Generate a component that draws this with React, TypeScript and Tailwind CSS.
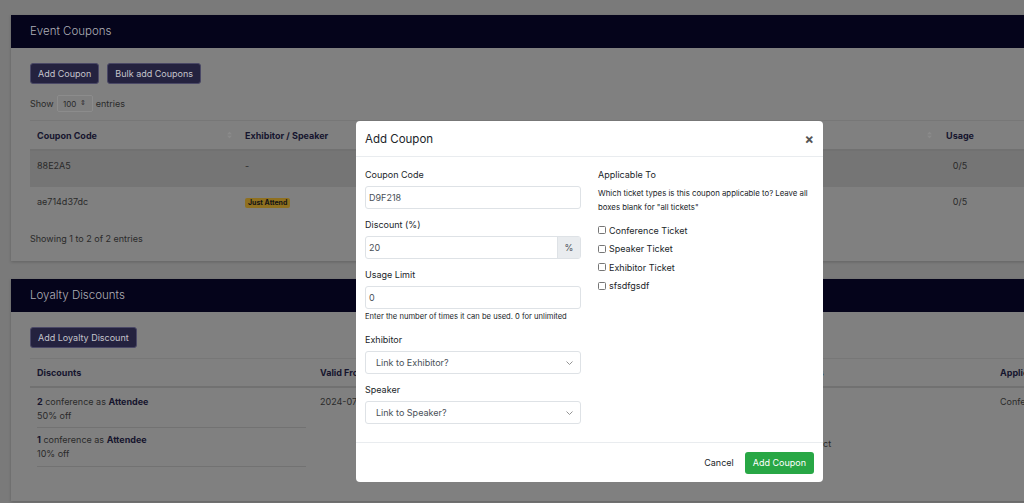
import React from "react";

type Coupon = { code: string; who: "none" | "attend"; usage: string };

const coupons: Coupon[] = [
  { code: "88E2A5", who: "none", usage: "0/5" },
  { code: "ae714d37dc", who: "attend", usage: "0/5" },
];

const loyalty = [
  { count: 2, off: "50% off" },
  { count: 1, off: "10% off" },
];

const ticketTypes = ["Conference Ticket", "Speaker Ticket", "Exhibitor Ticket", "sfsdfgsdf"];

function SortIcon() {
  return (
    <span className="absolute right-[6px] top-1/2 -translate-y-1/2 flex flex-col gap-[1px] text-[#8a8a8a]">
      <svg width="5" height="3" viewBox="0 0 5 3"><path d="M2.5 0L5 3H0z" fill="currentColor" /></svg>
      <svg width="5" height="3" viewBox="0 0 5 3"><path d="M0 0h5L2.5 3z" fill="currentColor" /></svg>
    </span>
  );
}

function DarkButton({ children }: { children: React.ReactNode }) {
  return (
    <button className="h-[21px] px-[7px] rounded-[3px] bg-[#24223f] border border-[#4a4866] text-[#c4c4cc] text-[9px] leading-none">
      {children}
    </button>
  );
}

function CardHeader({ title }: { title: string }) {
  return (
    <div className="h-[33px] bg-[#05041b] flex items-center px-[19px] pt-[1px] text-[11.5px] text-[#aeaeb6] font-light">
      {title}
    </div>
  );
}

function Field({ label, children }: { label: string; children: React.ReactNode }) {
  return (
    <div className="flex flex-col">
      <label className="text-[9px] leading-[14px] text-[#212529] mb-[4px]">{label}</label>
      {children}
    </div>
  );
}

function TextInput({ value }: { value: string }) {
  return (
    <div className="h-[23px] border border-[#dee2e6] rounded-[3px] px-[3px] flex items-center text-[9px] text-[#495057]">
      {value}
    </div>
  );
}

function SelectBox({ placeholder }: { placeholder: string }) {
  return (
    <div className="h-[23px] border border-[#dee2e6] rounded-[3px] pl-[10px] pr-[7px] flex items-center justify-between text-[9px] text-[#495057]">
      <span>{placeholder}</span>
      <svg width="7" height="4" viewBox="0 0 7 4" className="text-[#888]">
        <path d="M0.5 0.5L3.5 3.5L6.5 0.5" fill="none" stroke="currentColor" strokeWidth="0.9" />
      </svg>
    </div>
  );
}

function AddCouponModal() {
  return (
    <div className="absolute left-[356px] top-[121px] w-[467px] h-[361px] bg-white rounded-[4px] flex flex-col text-[#212529]">
      <div className="h-[36px] flex items-center justify-between px-[9px] border-b border-[#e9ecef]">
        <span className="text-[11.5px] pt-[2px]">Add Coupon</span>
        <span className="text-[14px] font-bold text-[#555] leading-none">×</span>
      </div>

      <div className="flex-1 flex gap-[17px] px-[9px] pt-[11px]">
        <div className="w-[216px] flex flex-col gap-[9px]">
          <Field label="Coupon Code">
            <TextInput value="D9F218" />
          </Field>
          <Field label="Discount (%)">
            <div className="h-[23px] flex border border-[#dee2e6] rounded-[3px] text-[9px] text-[#495057]">
              <div className="flex-1 px-[3px] flex items-center">20</div>
              <div className="w-[23px] bg-[#e9ecef] border-l border-[#dee2e6] flex items-center justify-center">%</div>
            </div>
          </Field>
          <div className="flex flex-col">
            <Field label="Usage Limit">
              <TextInput value="0" />
            </Field>
            <p className="mt-[2px] text-[7.6px] leading-[11px] text-[#212529] whitespace-nowrap">
              Enter the number of times it can be used. 0 for unlimited
            </p>
          </div>
          <div className="mt-[2px]">
            <Field label="Exhibitor">
              <SelectBox placeholder="Link to Exhibitor?" />
            </Field>
          </div>
          <Field label="Speaker">
            <SelectBox placeholder="Link to Speaker?" />
          </Field>
        </div>

        <div className="flex-1 flex flex-col">
          <div className="text-[9px] leading-[14px]">Applicable To</div>
          <p className="mt-[4px] text-[7.8px] leading-[14px]">
            Which ticket types is this coupon applicable to? Leave all boxes blank for "all tickets"
          </p>
          <div className="mt-[7px] flex flex-col">
            {ticketTypes.map(t => (
              <label key={t} className="h-[18.6px] flex items-center gap-[3px] text-[9px]">
                <span className="w-[8px] h-[8px] border border-[#767676] rounded-[1.5px] bg-white" />
                {t}
              </label>
            ))}
          </div>
        </div>
      </div>

      <div className="h-[40px] border-t border-[#e9ecef] flex items-center justify-end gap-[11px] px-[9px] pt-[1px]">
        <button className="text-[9px] text-[#212529]">Cancel</button>
        <button className="h-[22px] px-[8px] rounded-[3px] bg-[#28a745] text-white text-[9px]">Add Coupon</button>
      </div>
    </div>
  );
}

export default function App() {
  return (
    <div className="relative w-[1024px] h-[503px] overflow-hidden bg-[#7a7a7a] font-[Inter,sans-serif] text-[9px] text-[#2a2a2a]">
      <div className="w-[1060px] pl-[11px] pt-[15px] flex flex-col gap-[18px]">
        {/* Event coupons */}
        <section className="bg-[#808080] shadow-[0_1px_3px_rgba(0,0,0,0.2)]">
          <CardHeader title="Event Coupons" />
          <div className="px-[19px] pt-[15px] pb-[16px]">
            <div className="flex gap-[8px]">
              <DarkButton>Add Coupon</DarkButton>
              <DarkButton>Bulk add Coupons</DarkButton>
            </div>
            <div className="mt-[11px] h-[17px] flex items-center gap-[3px]">
              <span>Show</span>
              <span className="h-[17px] w-[36px] border border-[#8c8c8c] rounded-[2px] flex items-center justify-center gap-[4px] text-[8px]">
                100 <span className="text-[7px]">⇕</span>
              </span>
              <span>entries</span>
            </div>
            <table className="mt-[8px] w-full table-fixed border-collapse border-t border-[#777]">
              <colgroup>
                <col className="w-[208px]" />
                <col className="w-[300px]" />
                <col className="w-[200px]" />
                <col className="w-[200px]" />
                <col className="w-[44px]" />
                <col />
              </colgroup>
              <thead>
                <tr className="h-[29px] border-b-2 border-[#717171] text-[#16152e] font-bold text-left">
                  <th className="relative px-[7px] pt-[1px]">Coupon Code<SortIcon /></th>
                  <th className="relative px-[7px] pt-[1px]">Exhibitor / Speaker</th>
                  <th className="relative px-[7px]">Discount<SortIcon /></th>
                  <th className="relative px-[7px]">Tickets<SortIcon /></th>
                  <th className="text-center pt-[1px]">Usage</th>
                  <th />
                </tr>
              </thead>
              <tbody>
                {coupons.map((c, i) => (
                  <tr key={c.code} className={i === 0 ? "h-[37px] bg-[#757575]" : "h-[37px]"}>
                    <td className="px-[7px] align-top pt-[8px]">{c.code}</td>
                    <td className="px-[7px] align-top pt-[8px]">
                      {c.who === "none" ? (
                        "-"
                      ) : (
                        <span className="inline-block px-[3px] rounded-[2px] bg-[#8f7020] text-[#141414] text-[7px] font-bold leading-[10px]">
                          Just Attend
                        </span>
                      )}
                    </td>
                    <td />
                    <td />
                    <td className="align-top pt-[8px] text-center">{c.usage}</td>
                    <td />
                  </tr>
                ))}
              </tbody>
            </table>
            <div className="mt-[8px] leading-[13px]">Showing 1 to 2 of 2 entries</div>
          </div>
        </section>

        {/* Loyalty discounts */}
        <section className="bg-[#808080] shadow-[0_1px_3px_rgba(0,0,0,0.2)]">
          <CardHeader title="Loyalty Discounts" />
          <div className="px-[19px] pt-[15px] pb-[34px]">
            <DarkButton>Add Loyalty Discount</DarkButton>
            <table className="mt-[10px] w-full table-fixed border-collapse border-t border-[#777]">
              <colgroup>
                <col className="w-[283px]" />
                <col className="w-[200px]" />
                <col className="w-[247px]" />
                <col className="w-[233px]" />
                <col />
              </colgroup>
              <thead>
                <tr className="h-[29px] border-b-2 border-[#717171] text-[#16152e] font-bold text-left whitespace-nowrap">
                  <th className="px-[7px] pt-[1px]">Discounts</th>
                  <th className="px-[7px] pt-[1px]">Valid From</th>
                  <th className="px-[7px] pt-[1px]">Valid Until</th>
                  <th className="px-[7px] pt-[1px]">Ticket Types</th>
                  <th className="px-[7px] pt-[1px]">Applicable To</th>
                </tr>
              </thead>
              <tbody>
                <tr className="align-top whitespace-nowrap">
                  <td className="px-[7px] pt-[7px]">
                    {loyalty.map((l, i) => (
                      <div key={i} className={i === 0 ? "pb-[4px] border-b border-[#727272] leading-[14px]" : "pt-[5px] pb-[5px] border-b border-[#727272] leading-[14px]"}>
                        <div><b className="text-[#16152e]">{l.count}</b> conference as <b className="text-[#16152e]">Attendee</b></div>
                        <div>{l.off}</div>
                      </div>
                    ))}
                  </td>
                  <td className="px-[7px] pt-[7px] leading-[14px]">2024-07-01</td>
                  <td className="px-[7px] pt-[7px] leading-[14px]">2024-12-31</td>
                  <td className="px-[7px] pt-[7px] leading-[14px]">
                    <div className="mt-[42px]">Speaker Select</div>
                  </td>
                  <td className="px-[7px] pt-[7px] leading-[14px]">Conference Ticket</td>
                </tr>
              </tbody>
            </table>
          </div>
        </section>
      </div>

      <AddCouponModal />
    </div>
  );
}
